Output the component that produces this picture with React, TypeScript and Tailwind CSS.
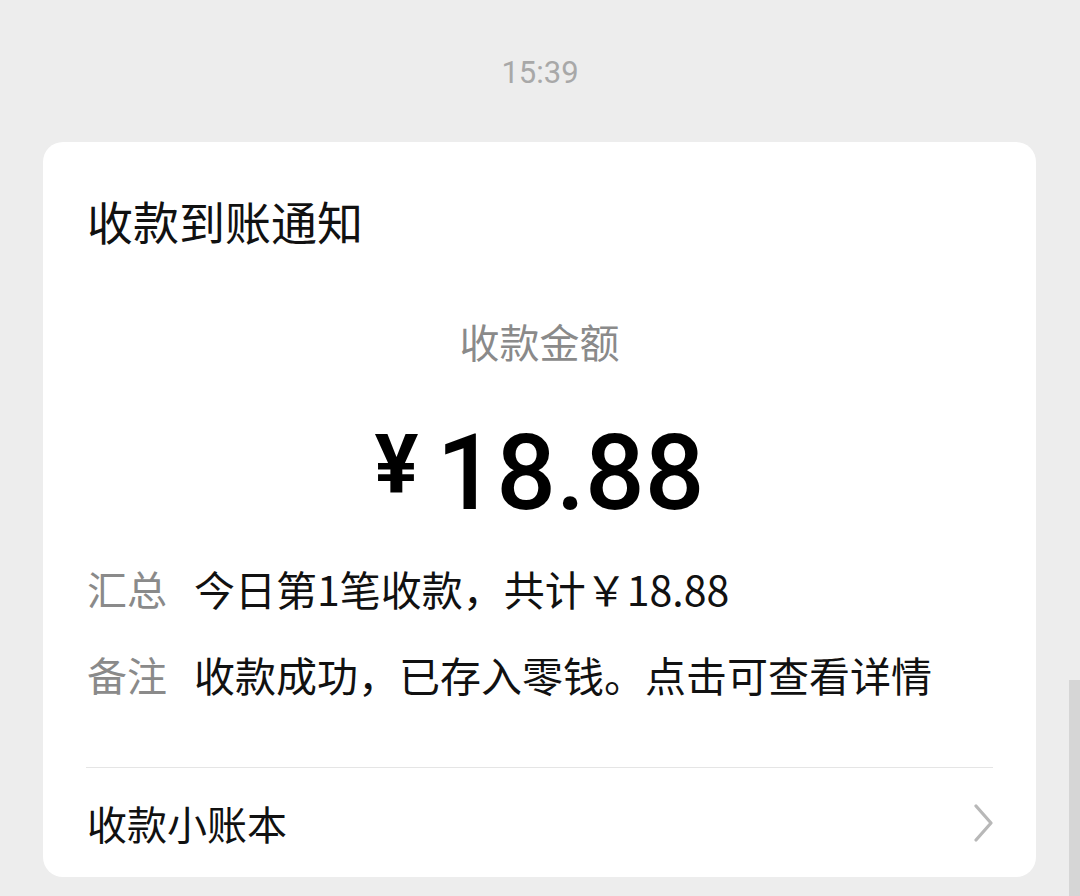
import React from 'react';

const cjk = '"Noto Sans CJK SC", "Noto Sans", sans-serif';
const latin = 'Roboto, "Noto Sans", sans-serif';

export default function App() {
  return (
    <div
      className="relative h-[896px] w-[1080px] overflow-hidden bg-[#ededed]"
      style={{ fontFamily: cjk }}
    >
      {/* timestamp */}
      <div className="flex h-[142px] justify-center pt-[57px]">
        <span className="text-[31px] leading-[32px] text-[#a8a8a8]" style={{ fontFamily: latin }}>
          15:39
        </span>
      </div>

      {/* card */}
      <div className="ml-[43px] w-[993px] rounded-[20px] bg-white">
        <div className="px-[44px] pt-[55px]">
          <div className="text-[46px] leading-[46px] text-[#111]">收款到账通知</div>

          <div className="mt-[78px] text-center text-[40px] leading-[40px] text-[#8a8a8a]">收款金额</div>

          <div className="mt-[60px] flex items-start justify-center text-black" style={{ fontFamily: latin }}>
            <span className="mr-[18px] mt-[2px] text-[82px] font-bold leading-[82px]">¥</span>
            <span className="text-[105px] font-medium leading-[105px]">18.88</span>
          </div>

          <div className="mt-[42px] flex flex-col gap-[45px] text-[41px] leading-[41px]">
            <div className="flex">
              <span className="w-[107px] text-[40px] text-[#8a8a8a]">汇总</span>
              <span className="text-[#111]">今日第1笔收款，共计￥18.88</span>
            </div>
            <div className="flex">
              <span className="w-[107px] text-[40px] text-[#8a8a8a]">备注</span>
              <span className="text-[#111]">收款成功，已存入零钱。点击可查看详情</span>
            </div>
          </div>
        </div>

        <div className="mx-[43px] mt-[72px] h-px bg-[#e5e5e5]" />

        <div className="flex h-[109px] items-center justify-between pl-[44px] pr-[42px]">
          <span className="text-[40px] leading-[40px] text-[#111]">收款小账本</span>
          <svg width="20" height="38" viewBox="0 0 20 38" fill="none">
            <path d="M2 2 L17 19 L2 36" stroke="#b8b8b8" strokeWidth="3.2" strokeLinecap="round" strokeLinejoin="round" />
          </svg>
        </div>
      </div>

      {/* scrollbar */}
      <div className="absolute right-0 top-[680px] h-[216px] w-[11px] bg-[#d6d6d6]" />
    </div>
  );
}
